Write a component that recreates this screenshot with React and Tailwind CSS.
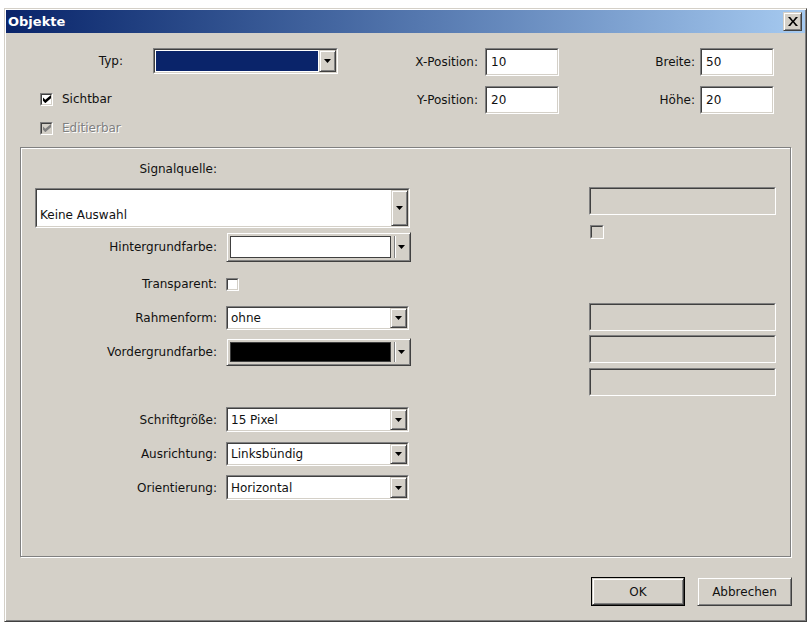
import React from 'react';

// classic win2k dialog "Objekte"

const Arrow = () => (
  <svg width="7" height="4" viewBox="0 0 7 4">
    <path d="M0 0h7L3.5 4z" fill="#000" />
  </svg>
);

const Check = ({ color = '#000' }) => (
  <svg width="8" height="8" viewBox="0 0 7 7">
    <path d="M0 2.2l2 2L7 0v2.8L2 7.2 0 5z" fill={color} />
  </svg>
);

const Raised = ({ className = '', children }) => (
  <div
    className={`bg-[#d4d0c8] border border-t-[#d4d0c8] border-l-[#d4d0c8] border-b-[#404040] border-r-[#404040] shadow-[inset_1px_1px_0_#fff,inset_-1px_-1px_0_#808080] ${className}`}
  >
    {children}
  </div>
);

const Sunken = ({ className = '', inner = '', children }) => (
  <div className={`border border-t-[#808080] border-l-[#808080] border-b-white border-r-white ${className}`}>
    <div className={`h-full border border-t-[#404040] border-l-[#404040] border-b-[#d4d0c8] border-r-[#d4d0c8] ${inner}`}>
      {children}
    </div>
  </div>
);

const Combo = ({ value, className = '', box = 'bg-white', align = 'items-center' }) => (
  <Sunken className={className} inner="flex bg-white">
    <div className={`flex-1 flex ${align} pl-[3px] ${box}`}>{value}</div>
    <Raised className="w-[17px] flex items-center justify-center">
      <Arrow />
    </Raised>
  </Sunken>
);

const ColorPick = ({ color, className = '' }) => (
  <Raised className={`flex p-[3px] ${className}`}>
    <div className={`flex-1 border border-[#404040] ${color}`} />
    <div className="ml-[3px] w-[2px] border-l border-l-[#808080] border-r border-r-white" />
    <div className="w-[11px] flex items-center justify-center">
      <Arrow />
    </div>
  </Raised>
);

const Box = ({ checked, disabled, className = 'w-[13px] h-[13px]' }) => (
  <Sunken
    className={className}
    inner={`flex items-center justify-center ${disabled ? 'bg-[#d4d0c8]' : 'bg-white'}`}
  >
    {checked ? <Check color={disabled ? '#808080' : '#000'} /> : null}
  </Sunken>
);

const Field = ({ value, className = '', disabled }) => (
  <Sunken className={className} inner={`flex items-center pl-[4px] ${disabled ? 'bg-[#d4d0c8]' : 'bg-white'}`}>
    {value}
  </Sunken>
);

const Row = ({ label, mt, children }) => (
  <div className={`flex items-center ${mt}`}>
    <div className="w-[196px] text-right">{label}</div>
    <div className="ml-[9px]">{children}</div>
  </div>
);

const Button = ({ label, isDefault }) => (
  <div className={isDefault ? 'border border-black' : ''}>
    <Raised className={`flex items-center justify-center ${isDefault ? 'w-[92px] h-[27px]' : 'w-[95px] h-[29px]'}`}>
      {label}
    </Raised>
  </div>
);

export default function App() {
  return (
    <div className="min-h-screen bg-white pt-[8px] pl-[4px] font-['DejaVu_Sans',sans-serif] text-[12px] text-[#111]">
      <div className="w-[803px] h-[614px] bg-[#d4d0c8] border border-t-[#d4d0c8] border-l-[#d4d0c8] border-b-[#404040] border-r-[#404040] shadow-[inset_1px_1px_0_#fff,inset_-1px_-1px_0_#808080] p-[1px] flex flex-col">
        {/* Title bar */}
        <div className="h-[23px] flex items-center justify-between bg-gradient-to-r from-[#0a246a] to-[#a6caf0] pl-[2px] pr-[3px]">
          <span className="text-white font-bold text-[13px]">Objekte</span>
          <Raised className="w-[19px] h-[19px] flex items-center justify-center">
            <svg width="10" height="9" viewBox="0 0 9 8">
              <path d="M0 0h2l2.5 3L7 0h2L5.5 4 9 8H7L4.5 5 2 8H0l3.5-4z" fill="#000" />
            </svg>
          </Raised>
        </div>

        {/* Top fields */}
        <div className="h-[114px] pt-[15px] flex">
          <div className="w-[399px]">
            <div className="flex items-center h-[26px]">
              <div className="w-[117px] text-right">Typ:</div>
              <Combo className="ml-[30px] w-[185px] h-[26px]" box="m-[1px] bg-[#0a246a]" />
            </div>
            <div className="mt-[17px] h-[16px] pl-[34px] flex items-center">
              <Box checked />
              <span className="ml-[9px]">Sichtbar</span>
            </div>
            <div className="mt-[13px] h-[16px] pl-[34px] flex items-center">
              <Box checked disabled />
              <span className="ml-[9px] text-[#808080] [text-shadow:1px_1px_0_#fff]">Editierbar</span>
            </div>
          </div>
          <div className="flex flex-col gap-[10px]">
            <div className="flex items-center">
              <div className="w-[73px] text-right">X-Position:</div>
              <Field value="10" className="ml-[7px] w-[74px] h-[28px]" />
            </div>
            <div className="flex items-center">
              <div className="w-[73px] text-right">Y-Position:</div>
              <Field value="20" className="ml-[7px] w-[74px] h-[28px]" />
            </div>
          </div>
          <div className="flex flex-col gap-[10px]">
            <div className="flex items-center">
              <div className="w-[136px] text-right">Breite:</div>
              <Field value="50" className="ml-[5px] w-[74px] h-[28px]" />
            </div>
            <div className="flex items-center">
              <div className="w-[136px] text-right">Höhe:</div>
              <Field value="20" className="ml-[5px] w-[74px] h-[28px]" />
            </div>
          </div>
        </div>

        {/* Group box */}
        <div className="ml-[14px] w-[771px] h-[410px] border border-[#808080] shadow-[inset_1px_1px_0_#fff,1px_1px_0_#fff] flex">
          <div className="w-[390px]">
            <div className="mt-[12px] h-[16px] w-[196px] text-right">Signalquelle:</div>
            <Combo
              value="Keine Auswahl"
              className="mt-[12px] ml-[14px] w-[375px] h-[40px]"
              align="items-end pb-[2px]"
            />
            <Row label="Hintergrundfarbe:" mt="mt-[4px]">
              <ColorPick color="bg-white" className="w-[185px] h-[30px]" />
            </Row>
            <Row label="Transparent:" mt="mt-[13px]">
              <Box />
            </Row>
            <Row label="Rahmenform:" mt="mt-[13px]">
              <Combo value="ohne" className="w-[183px] h-[24px]" />
            </Row>
            <Row label="Vordergrundfarbe:" mt="mt-[8px]">
              <ColorPick color="bg-black" className="w-[185px] h-[28px]" />
            </Row>
            <Row label="Schriftgröße:" mt="mt-[41px]">
              <Combo value="15 Pixel" className="w-[183px] h-[25px]" />
            </Row>
            <Row label="Ausrichtung:" mt="mt-[10px]">
              <Combo value="Linksbündig" className="w-[183px] h-[24px]" />
            </Row>
            <Row label="Orientierung:" mt="mt-[9px]">
              <Combo value="Horizontal" className="w-[183px] h-[25px]" />
            </Row>
          </div>
          <div className="ml-[178px] w-[187px]">
            <Field disabled className="mt-[39px] h-[28px]" />
            <Box disabled className="mt-[10px] ml-[1px] w-[14px] h-[14px]" />
            <Field disabled className="mt-[64px] h-[28px]" />
            <Field disabled className="mt-[4px] h-[28px]" />
            <Field disabled className="mt-[5px] h-[28px]" />
          </div>
        </div>

        {/* Buttons */}
        <div className="mt-[20px] pr-[13px] flex justify-end gap-[12px]">
          <Button label="OK" isDefault />
          <Button label="Abbrechen" />
        </div>
      </div>
    </div>
  );
}
